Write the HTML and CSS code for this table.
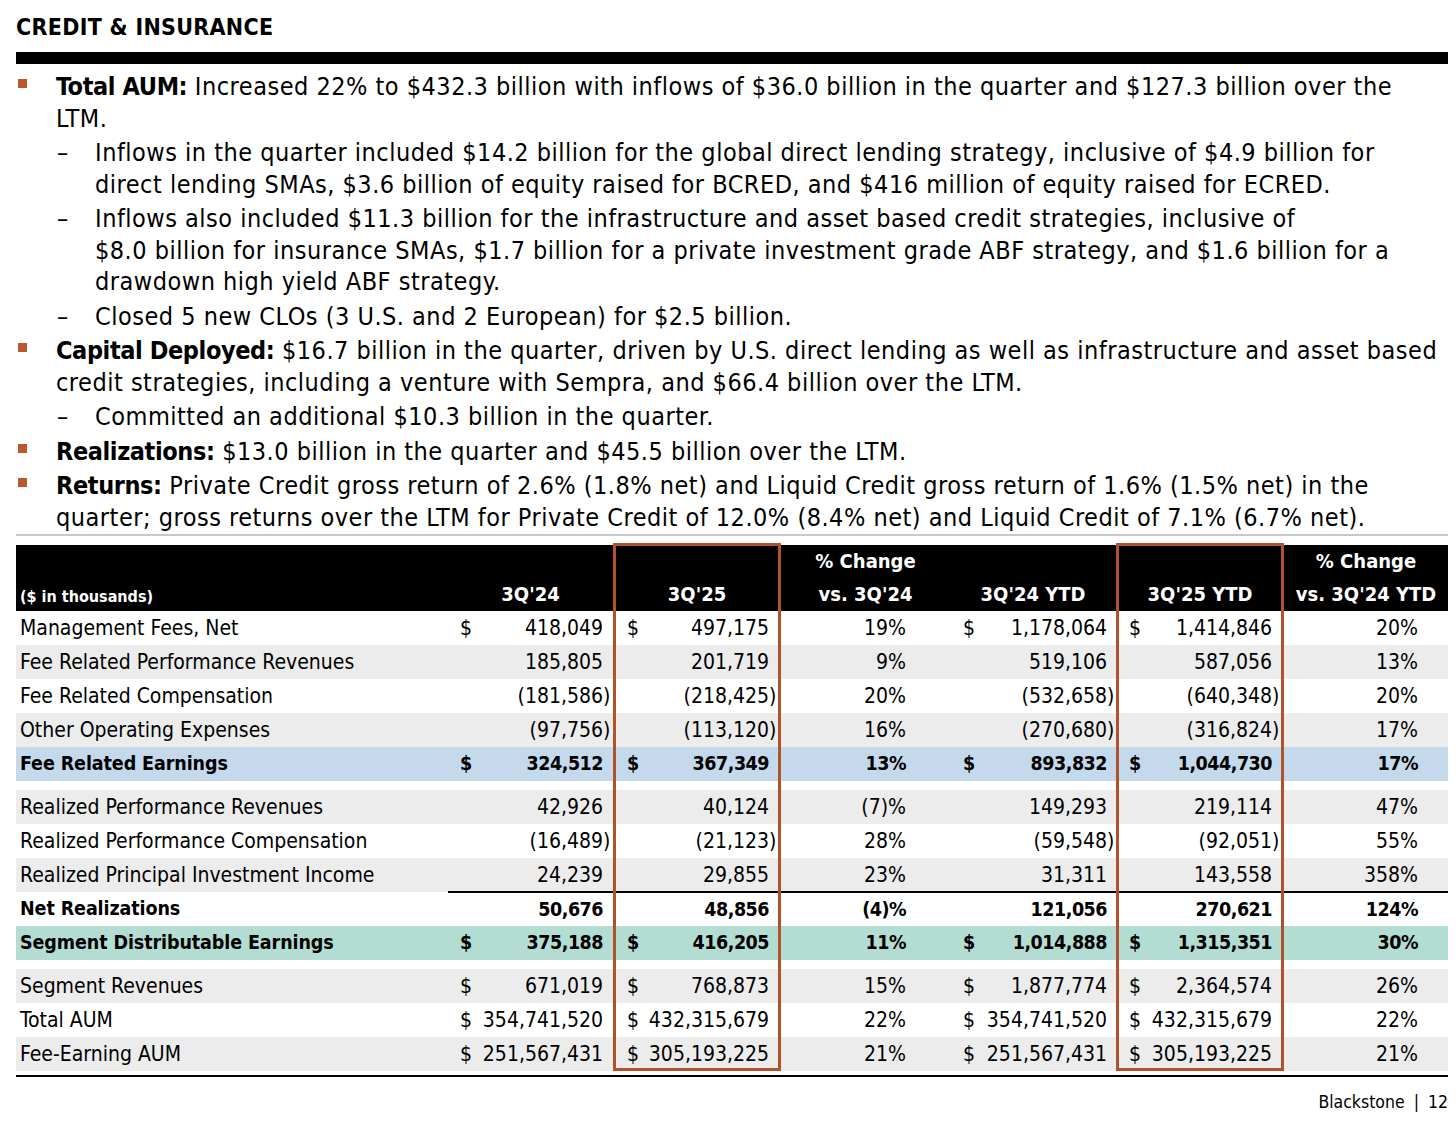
FILE: index.html
```html
<!DOCTYPE html>
<html lang="en">
<head>
<meta charset="utf-8">
<title>Credit &amp; Insurance</title>
<link rel="stylesheet" href="styles.css">
</head>
<body>
<div class="page">
  <h1 class="title">CREDIT &amp; INSURANCE</h1>
  <div class="bar"></div>

  <ul class="bullets">
    <li class="item">
      <span class="sq"></span>
      <div class="body">
        <p><b>Total AUM:</b> Increased 22% to $432.3 billion with inflows of $36.0 billion in the quarter and $127.3 billion over the<br>LTM.</p>
        <ul class="sub">
          <li><span class="dash">–</span><p>Inflows in the quarter included $14.2 billion for the global direct lending strategy, inclusive of $4.9 billion for<br>direct lending SMAs, $3.6 billion of equity raised for BCRED, and $416 million of equity raised for ECRED.</p></li>
          <li><span class="dash">–</span><p>Inflows also included $11.3 billion for the infrastructure and asset based credit strategies, inclusive of<br>$8.0 billion for insurance SMAs, $1.7 billion for a private investment grade ABF strategy, and $1.6 billion for a<br>drawdown high yield ABF strategy.</p></li>
          <li><span class="dash">–</span><p>Closed 5 new CLOs (3 U.S. and 2 European) for $2.5 billion.</p></li>
        </ul>
      </div>
    </li>
    <li class="item">
      <span class="sq"></span>
      <div class="body">
        <p><b>Capital Deployed:</b> $16.7 billion in the quarter, driven by U.S. direct lending as well as infrastructure and asset based<br>credit strategies, including a venture with Sempra, and $66.4 billion over the LTM.</p>
        <ul class="sub">
          <li><span class="dash">–</span><p>Committed an additional $10.3 billion in the quarter.</p></li>
        </ul>
      </div>
    </li>
    <li class="item">
      <span class="sq"></span>
      <div class="body">
        <p><b>Realizations:</b> $13.0 billion in the quarter and $45.5 billion over the LTM.</p>
      </div>
    </li>
    <li class="item">
      <span class="sq"></span>
      <div class="body">
        <p><b>Returns:</b> Private Credit gross return of 2.6% (1.8% net) and Liquid Credit gross return of 1.6% (1.5% net) in the<br>quarter; gross returns over the LTM for Private Credit of 12.0% (8.4% net) and Liquid Credit of 7.1% (6.7% net).</p>
      </div>
    </li>
  </ul>

  <div class="rule"></div>

  <div class="table-wrap">
    <table class="fin">
      <colgroup>
        <col class="c-label">
        <col class="c-q24">
        <col class="c-q25">
        <col class="c-pct">
        <col class="c-y24">
        <col class="c-y25">
        <col class="c-pcty">
      </colgroup>
      <thead>
        <tr>
          <th class="lbl-head">($ in thousands)</th>
          <th>3Q'24</th>
          <th>3Q'25</th>
          <th>% Change<br>vs. 3Q'24</th>
          <th>3Q'24 YTD</th>
          <th>3Q'25 YTD</th>
          <th>% Change<br>vs. 3Q'24 YTD</th>
        </tr>
      </thead>
      <tbody>
        <tr>
          <td class="lbl">Management Fees, Net</td>
          <td class="num q24"><span class="cur">$</span>418,049</td>
          <td class="num q25"><span class="cur">$</span>497,175</td>
          <td class="pct">19%</td>
          <td class="num y24"><span class="cur">$</span>1,178,064</td>
          <td class="num y25"><span class="cur">$</span>1,414,846</td>
          <td class="pcty">20%</td>
        </tr>
        <tr class="alt">
          <td class="lbl">Fee Related Performance Revenues</td>
          <td class="num q24">185,805</td>
          <td class="num q25">201,719</td>
          <td class="pct">9%</td>
          <td class="num y24">519,106</td>
          <td class="num y25">587,056</td>
          <td class="pcty">13%</td>
        </tr>
        <tr>
          <td class="lbl">Fee Related Compensation</td>
          <td class="num q24">(181,586<span class="rp">)</span></td>
          <td class="num q25">(218,425<span class="rp">)</span></td>
          <td class="pct">20%</td>
          <td class="num y24">(532,658<span class="rp">)</span></td>
          <td class="num y25">(640,348<span class="rp">)</span></td>
          <td class="pcty">20%</td>
        </tr>
        <tr class="alt">
          <td class="lbl">Other Operating Expenses</td>
          <td class="num q24">(97,756<span class="rp">)</span></td>
          <td class="num q25">(113,120<span class="rp">)</span></td>
          <td class="pct">16%</td>
          <td class="num y24">(270,680<span class="rp">)</span></td>
          <td class="num y25">(316,824<span class="rp">)</span></td>
          <td class="pcty">17%</td>
        </tr>
        <tr class="fre bold">
          <td class="lbl">Fee Related Earnings</td>
          <td class="num q24"><span class="cur">$</span>324,512</td>
          <td class="num q25"><span class="cur">$</span>367,349</td>
          <td class="pct">13%</td>
          <td class="num y24"><span class="cur">$</span>893,832</td>
          <td class="num y25"><span class="cur">$</span>1,044,730</td>
          <td class="pcty">17%</td>
        </tr>
        <tr class="gap"><td colspan="7"></td></tr>
        <tr class="alt">
          <td class="lbl">Realized Performance Revenues</td>
          <td class="num q24">42,926</td>
          <td class="num q25">40,124</td>
          <td class="pct">(7)%</td>
          <td class="num y24">149,293</td>
          <td class="num y25">219,114</td>
          <td class="pcty">47%</td>
        </tr>
        <tr>
          <td class="lbl">Realized Performance Compensation</td>
          <td class="num q24">(16,489<span class="rp">)</span></td>
          <td class="num q25">(21,123<span class="rp">)</span></td>
          <td class="pct">28%</td>
          <td class="num y24">(59,548<span class="rp">)</span></td>
          <td class="num y25">(92,051<span class="rp">)</span></td>
          <td class="pcty">55%</td>
        </tr>
        <tr class="alt">
          <td class="lbl">Realized Principal Investment Income</td>
          <td class="num q24">24,239</td>
          <td class="num q25">29,855</td>
          <td class="pct">23%</td>
          <td class="num y24">31,311</td>
          <td class="num y25">143,558</td>
          <td class="pcty">358%</td>
        </tr>
        <tr class="net bold">
          <td class="lbl">Net Realizations</td>
          <td class="num q24">50,676</td>
          <td class="num q25">48,856</td>
          <td class="pct">(4)%</td>
          <td class="num y24">121,056</td>
          <td class="num y25">270,621</td>
          <td class="pcty">124%</td>
        </tr>
        <tr class="sde bold">
          <td class="lbl">Segment Distributable Earnings</td>
          <td class="num q24"><span class="cur">$</span>375,188</td>
          <td class="num q25"><span class="cur">$</span>416,205</td>
          <td class="pct">11%</td>
          <td class="num y24"><span class="cur">$</span>1,014,888</td>
          <td class="num y25"><span class="cur">$</span>1,315,351</td>
          <td class="pcty">30%</td>
        </tr>
        <tr class="gap"><td colspan="7"></td></tr>
        <tr class="alt">
          <td class="lbl">Segment Revenues</td>
          <td class="num q24"><span class="cur">$</span>671,019</td>
          <td class="num q25"><span class="cur">$</span>768,873</td>
          <td class="pct">15%</td>
          <td class="num y24"><span class="cur">$</span>1,877,774</td>
          <td class="num y25"><span class="cur">$</span>2,364,574</td>
          <td class="pcty">26%</td>
        </tr>
        <tr>
          <td class="lbl">Total AUM</td>
          <td class="num q24"><span class="cur">$</span>354,741,520</td>
          <td class="num q25"><span class="cur">$</span>432,315,679</td>
          <td class="pct">22%</td>
          <td class="num y24"><span class="cur">$</span>354,741,520</td>
          <td class="num y25"><span class="cur">$</span>432,315,679</td>
          <td class="pcty">22%</td>
        </tr>
        <tr class="alt">
          <td class="lbl">Fee-Earning AUM</td>
          <td class="num q24"><span class="cur">$</span>251,567,431</td>
          <td class="num q25"><span class="cur">$</span>305,193,225</td>
          <td class="pct">21%</td>
          <td class="num y24"><span class="cur">$</span>251,567,431</td>
          <td class="num y25"><span class="cur">$</span>305,193,225</td>
          <td class="pcty">21%</td>
        </tr>
        <tr class="tail"><td colspan="7"></td></tr>
      </tbody>
    </table>
    <div class="hl hl-q25"></div>
    <div class="hl hl-y25"></div>
  </div>

  <div class="footer">Blackstone <span class="sep">|</span> 12</div>
</div>
</body>
</html>
```

FILE: styles.css
```css
* { box-sizing: border-box; }

html, body {
  margin: 0;
  padding: 0;
  background: #ffffff;
}

body {
  font-family: "DejaVu Sans Condensed", "DejaVu Sans", sans-serif;
  color: #000;
}

.page {
  width: 1456px;
  padding: 12px 8px 0 16px;
}

.title {
  margin: 0;
  font-size: 23px;
  line-height: 30px;
  font-weight: bold;
  letter-spacing: 0.3px;
}

.bar {
  margin-top: 10px;
  height: 12px;
  width: 1432px;
  background: #000;
}

.bullets {
  list-style: none;
  margin: 0;
  padding: 4px 0 0 0;
  width: 1432px;
}

.item {
  display: flex;
  margin-top: 3px;
}

.sq {
  flex: 0 0 auto;
  width: 9px;
  height: 9px;
  margin: 8px 29px 0 2px;
  background: #b85a2e;
}

.body {
  flex: 1 1 auto;
}

.body p {
  margin: 0;
  font-size: 25px;
  letter-spacing: 0.5px;
  line-height: 31.5px;
  white-space: nowrap;
}

.body p b {
  letter-spacing: -0.4px;
}

.sub {
  list-style: none;
  margin: 0;
  padding: 0;
}

.sub li {
  display: flex;
  margin-top: 3px;
}

.dash {
  flex: 0 0 auto;
  width: 39px;
  padding-left: 1px;
  font-size: 25px;
  line-height: 31.5px;
}

.rule {
  margin-top: 1px;
  width: 1432px;
  height: 2px;
  background: #c8c8c8;
}

.table-wrap {
  position: relative;
  margin-top: 9px;
  width: 1432px;
}

.fin {
  border-collapse: collapse;
  table-layout: fixed;
  width: 1432px;
  font-size: 21px;
}

.c-label { width: 432px; }
.c-q24 { width: 165px; }
.c-q25 { width: 168px; }
.c-pct { width: 169px; }
.c-y24 { width: 166px; }
.c-y25 { width: 168px; }
.c-pcty { width: 164px; }

.fin thead th {
  background: #000;
  color: #fff;
  font-weight: bold;
  font-size: 20px;
  line-height: 33px;
  height: 66px;
  vertical-align: bottom;
  text-align: center;
  padding: 0;
  white-space: nowrap;
}

.fin thead th.lbl-head {
  text-align: left;
  font-size: 16px;
  font-weight: bold;
  padding-left: 4px;
  line-height: 28px;
}

.fin td {
  height: 34px;
  padding: 0;
  white-space: nowrap;
  vertical-align: middle;
  line-height: 24px;
}

.fin tr.alt td { background: #ececec; }
.fin tr.fre td { background: #c5d9ec; }
.fin tr.sde td { background: #b3dcd3; }
.fin tr.bold td {
  font-weight: bold;
  font-size: 19.5px;
  letter-spacing: -0.1px;
}
.fin tr.bold td.num,
.fin tr.bold td.pct,
.fin tr.bold td.pcty {
  letter-spacing: -0.5px;
}

.fin tr.gap td { height: 9px; background: #fff; }
.fin tr.tail td { height: 5px; border-bottom: 2px solid #000; }

.fin tr.net td.num,
.fin tr.net td.pct,
.fin tr.net td.pcty { border-top: 2px solid #000; }

.lbl { padding-left: 4px !important; }

.num { text-align: right; }
.cur { float: left; letter-spacing: 0; }

.q24 { padding-left: 12px !important; padding-right: 10px !important; }
.q25 { padding-left: 14px !important; padding-right: 12px !important; }
.y24 { padding-left: 13px !important; padding-right: 9px !important; }
.y25 { padding-left: 13px !important; padding-right: 12px !important; }

.rp { display: inline-block; width: 0; overflow: visible; }

.pct { text-align: right; padding-right: 44px !important; }
.pcty { text-align: right; padding-right: 30px !important; }

.hl {
  position: absolute;
  top: -2px;
  height: 528px;
  width: 168px;
  border: 3px solid #b0532a;
  pointer-events: none;
}

.hl-q25 { left: 597px; }
.hl-y25 { left: 1100px; }

.footer {
  width: 1432px;
  text-align: right;
  margin-top: 14px;
  font-size: 17.5px;
  line-height: 22px;
}

.sep { margin: 0 4px; }
```
